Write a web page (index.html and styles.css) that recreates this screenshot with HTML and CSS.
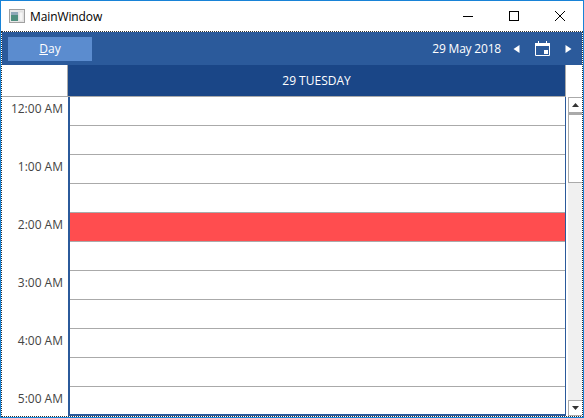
FILE: index.html
```html
<!DOCTYPE html>
<html lang="en">
<head>
    <meta charset="UTF-8">
    <title>MainWindow</title>
    <link rel="stylesheet" href="styles.css">
</head>
<body>
    <div class="window">
        <!-- Title bar -->
        <div class="titlebar">
            <svg class="app-icon" width="16" height="14" viewBox="0 0 16 14">
                <rect x="0.5" y="0.5" width="15" height="13" fill="#e8e8e8" stroke="#a0a0a0"/>
                <rect x="2" y="3" width="7" height="9" fill="#4f8f7f"/>
                <rect x="2" y="3" width="7" height="3" fill="#8fa8b8"/>
                <rect x="10" y="3" width="4" height="9" fill="#f6f6f6" stroke="#d0d0d0" stroke-width="0.5"/>
            </svg>
            <span class="title-text">MainWindow</span>
            <div class="window-buttons">
                <svg class="win-btn" width="46" height="30" viewBox="0 0 46 30"><line x1="18" y1="15.5" x2="28" y2="15.5" stroke="#000"/></svg>
                <svg class="win-btn" width="46" height="30" viewBox="0 0 46 30"><rect x="18.5" y="10.5" width="9" height="9" fill="none" stroke="#000"/></svg>
                <svg class="win-btn" width="46" height="30" viewBox="0 0 46 30"><path d="M18 10 L28 20 M28 10 L18 20" stroke="#000" fill="none"/></svg>
            </div>
        </div>

        <div class="content">
            <!-- Toolbar -->
            <div class="toolbar">
                <button class="day-btn"><u>D</u>ay</button>
                <span class="date-label">29 May 2018</span>
                <svg class="nav-arrow prev" width="7" height="8" viewBox="0 0 7 8"><path d="M6.5 0 L6.5 8 L0.5 4 Z" fill="#fff"/></svg>
                <svg class="cal-icon" width="15" height="15" viewBox="0 0 15 15">
                    <path d="M0.5 2.5 H14.5 V14.5 H0.5 Z" fill="none" stroke="#fff"/>
                    <rect x="0" y="2" width="15" height="3" fill="#fff"/>
                    <rect x="3" y="0" width="1" height="3" fill="#fff"/>
                    <rect x="11" y="0" width="1" height="3" fill="#fff"/>
                    <rect x="9" y="9" width="4" height="4" fill="#fff"/>
                </svg>
                <svg class="nav-arrow next" width="7" height="8" viewBox="0 0 7 8"><path d="M0.5 0 L0.5 8 L6.5 4 Z" fill="#fff"/></svg>
            </div>

            <!-- Day header -->
            <div class="header-row">
                <div class="corner"></div>
                <div class="day-header">29 TUESDAY</div>
                <div class="header-gap"></div>
            </div>

            <!-- Schedule -->
            <div class="schedule">
                <div class="times">
                    <div class="time-slot">12:00 AM</div>
                    <div class="half-slot"></div>
                    <div class="time-slot">1:00 AM</div>
                    <div class="half-slot"></div>
                    <div class="time-slot">2:00 AM</div>
                    <div class="half-slot"></div>
                    <div class="time-slot">3:00 AM</div>
                    <div class="half-slot"></div>
                    <div class="time-slot">4:00 AM</div>
                    <div class="half-slot"></div>
                    <div class="time-slot">5:00 AM</div>
                </div>
                <div class="cells">
                    <div class="cell"></div>
                    <div class="cell"></div>
                    <div class="cell"></div>
                    <div class="cell"></div>
                    <div class="cell busy"></div>
                    <div class="cell"></div>
                    <div class="cell"></div>
                    <div class="cell"></div>
                    <div class="cell"></div>
                    <div class="cell"></div>
                    <div class="cell"></div>
                </div>
                <div class="scrollbar">
                    <div class="scroll-btn"><svg width="7" height="4" viewBox="0 0 7 4"><path d="M3.5 0 L7 4 L0 4 Z" fill="#333"/></svg></div>
                    <div class="scroll-thumb"></div>
                    <div class="scroll-track"></div>
                    <div class="scroll-btn"><svg width="7" height="4" viewBox="0 0 7 4"><path d="M0 0 L7 0 L3.5 4 Z" fill="#333"/></svg></div>
                </div>
            </div>
        </div>
    </div>
</body>
</html>
```

FILE: styles.css
```css
* {
    box-sizing: border-box;
}
html, body {
    margin: 0;
    height: 100%;
    overflow: hidden;
}
body {
    font-family: "Open Sans", "Liberation Sans", sans-serif;
    font-size: 12px;
    background-color: #fff;
}
.window {
    width: 584px;
    height: 418px;
    display: flex;
    flex-direction: column;
    border: 1px solid #1883d7;
    border-top-width: 1px;
}
.titlebar {
    height: 30px;
    flex: none;
    display: flex;
    align-items: center;
    padding-left: 8px;
    background-color: #fff;
    color: #000;
}
.app-icon {
    margin-right: 5px;
}
.title-text {
    font-size: 12px;
    letter-spacing: -0.1px;
}
.window-buttons {
    margin-left: auto;
    display: flex;
}
.win-btn {
    display: block;
}
.content {
    flex: 1;
    min-height: 0;
    display: flex;
    flex-direction: column;
    border: 1px dotted #333;
}
.toolbar {
    height: 33px;
    flex: none;
    display: flex;
    align-items: center;
    padding: 0 10px 0 6px;
    background-color: #2b5a9b;
    color: #fff;
}
.day-btn {
    width: 84px;
    height: 24px;
    border: none;
    padding: 0;
    font: inherit;
    color: #fff;
    background-color: #5b8ccf;
}
.date-label {
    margin-left: auto;
    letter-spacing: -0.2px;
}
.nav-arrow {
    display: block;
}
.prev {
    margin-left: 12px;
}
.cal-icon {
    display: block;
    margin-left: 15px;
}
.next {
    margin-left: 15px;
}
.header-row {
    height: 32px;
    flex: none;
    display: flex;
}
.corner {
    width: 66px;
    border-bottom: 1px solid #aaa;
    border-right: 1px solid #aaa;
}
.day-header {
    width: 498px;
    display: flex;
    align-items: center;
    justify-content: center;
    color: #fff;
    background-color: #1a4687;
    border-bottom: 1px solid #aaa;
    border-right: 1px solid #aaa;
}
.header-gap {
    flex: 1;
}
.schedule {
    flex: 1;
    min-height: 0;
    display: flex;
    overflow: hidden;
}
.times {
    width: 66px;
    flex: none;
    text-align: right;
    color: #444;
}
.time-slot {
    height: 29px;
    padding: 3px 5px 0 0;
    border-bottom: 1px solid #aaa;
    border-bottom-color: transparent;
    position: relative;
}
.half-slot {
    height: 29px;
    border-bottom: 1px solid #aaa;
}
.time-slot + .half-slot {
    background: linear-gradient(to right, #fff 45px, #fff 45px);
    border-bottom: none;
    box-shadow: none;
}
.half-slot {
    height: 29px;
    border-bottom: 1px solid #aaa;
}
.cells {
    width: 498px;
    flex: none;
    border-left: 2px solid #2b5a9b;
    border-right: 1px solid #2b5a9b;
    border-bottom: 2px solid #2b5a9b;
    overflow: hidden;
}
.cell {
    height: 29px;
    border-bottom: 1px solid #aaa;
}
.busy {
    background-color: #ff4d4f;
}
.scrollbar {
    flex: 1;
    display: flex;
    flex-direction: column;
    margin-left: 2px;
    background-color: #f0f0f0;
}
.scroll-btn {
    height: 16px;
    flex: none;
    display: flex;
    align-items: center;
    justify-content: center;
    background-color: #fff;
    border: 1px solid #aaa;
    border-right: none;
}
.scroll-thumb {
    height: 70px;
    flex: none;
    background-color: #fff;
    border: 1px solid #aaa;
    border-top-width: 2px;
    border-right: none;
}
.scroll-track {
    flex: 1;
}
```
